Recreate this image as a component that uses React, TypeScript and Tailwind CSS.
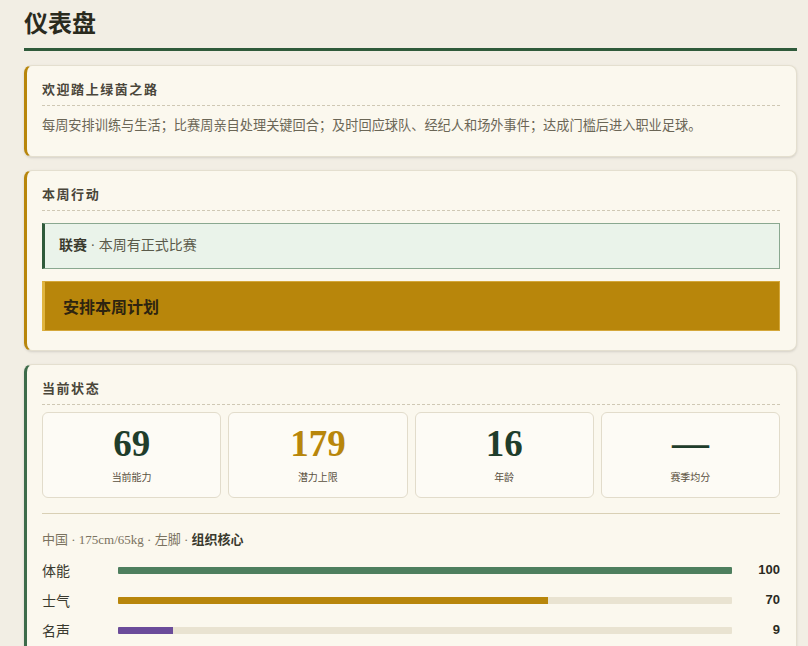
import React from "react";

const SANS = { fontFamily: '"Noto Sans CJK SC", "Noto Sans", sans-serif' };
const SERIF = { fontFamily: '"Liberation Serif", "Noto Sans CJK SC", serif' };
const NUM = { fontFamily: '"Liberation Serif", "DejaVu Serif", serif' };
const VAL = { fontFamily: '"Liberation Sans", Arial, sans-serif' };

interface Stat {
    value: string;
    label: string;
    color: string;
}

const stats: Stat[] = [
    { value: "69", label: "当前能力", color: "text-[#1f3d2b]" },
    { value: "179", label: "潜力上限", color: "text-[#b8860b]" },
    { value: "16", label: "年龄", color: "text-[#1f3d2b]" },
    { value: "—", label: "赛季均分", color: "text-[#1f3d2b]" },
];

const bars = [
    { label: "体能", value: 100, color: "bg-[#4e7f5e]" },
    { label: "士气", value: 70, color: "bg-[#b8860b]" },
    { label: "名声", value: 9, color: "bg-[#6b4c9a]" },
];

function CardTitle({ children }: { children: React.ReactNode }) {
    return (
        <h2
            style={SANS}
            className="text-[13px] leading-5 font-bold tracking-[0.12em] text-[#4a463a] pb-[6px] border-b border-dashed border-[#cfc8b4]"
        >
            {children}
        </h2>
    );
}

export default function App() {
    return (
        <div className="min-h-screen bg-[#f2eee4] pl-6 pr-[11px] pt-[6px] pb-10">
            {/* Header */}
            <h1
                style={SANS}
                className="text-[24px] leading-8 font-bold text-[#2a2a1e] pb-[10px] border-b-[3px] border-[#2f5a3a]"
            >
                仪表盘
            </h1>

            <div className="flex flex-col gap-[13px] mt-[14px]">
                {/* Welcome */}
                <section className="rounded-lg border border-[#e4dfcf] border-l-[3px] border-l-[#b8860b] bg-[#fbf8ee] pl-[15px] pr-4 pt-[13px] pb-[20px] shadow-sm">
                    <CardTitle>欢迎踏上绿茵之路</CardTitle>
                    <p style={SERIF} className="mt-[10px] text-[13.2px] leading-5 text-[#6b6656]">
                        每周安排训练与生活；比赛周亲自处理关键回合；及时回应球队、经纪人和场外事件；达成门槛后进入职业足球。
                    </p>
                </section>

                {/* Weekly action */}
                <section className="rounded-lg border border-[#e4dfcf] border-l-[3px] border-l-[#b8860b] bg-[#fbf8ee] pl-[15px] pr-4 pt-[13px] pb-[19px] shadow-sm">
                    <CardTitle>本周行动</CardTitle>
                    <div className="mt-[12px] border border-[#8aa890] border-l-[3px] border-l-[#2f5a3a] bg-[#eaf3ea] pl-[14px] py-[12px]">
                        <p style={SERIF} className="text-[14px] leading-5 text-[#5a5a4a]">
                            <span className="font-bold text-[#3a3a2e]">联赛</span> · 本周有正式比赛
                        </p>
                    </div>
                    <button
                        style={SANS}
                        className="mt-[12px] w-full h-[50px] text-left bg-[#b8860b] border border-[#d4a73a] border-l-[3px] border-l-[#e0b540] pl-[18px] text-[16px] font-bold text-[#2e2410]"
                    >
                        安排本周计划
                    </button>
                </section>

                {/* Current status */}
                <section className="rounded-lg border border-[#e4dfcf] border-l-[3px] border-l-[#3d6b4a] bg-[#fbf8ee] pl-[15px] pr-4 pt-[13px] pb-6 shadow-sm">
                    <CardTitle>当前状态</CardTitle>
                    <div className="mt-[7px] grid grid-cols-4 gap-[7px]">
                        {stats.map((s) => (
                            <div
                                key={s.label}
                                className="h-[86px] rounded-md border border-[#e2dccb] bg-[#fdfbf5] flex flex-col items-center pt-[11px]"
                            >
                                <span style={NUM} className={`text-[37px] leading-10 font-bold ${s.color}`}>
                                    {s.value}
                                </span>
                                <span style={SANS} className="mt-[6px] text-[10px] leading-[14px] text-[#5a5040]">
                                    {s.label}
                                </span>
                            </div>
                        ))}
                    </div>

                    <div className="mt-[15px] border-t border-[#d9d0b5]" />

                    <p style={SERIF} className="mt-[16px] text-[13px] leading-5 text-[#7a7260]">
                        中国 · 175cm/65kg · 左脚 · <span className="font-bold text-[#3a3a2e]">组织核心</span>
                    </p>

                    <div className="mt-[10px] flex flex-col gap-[10px]">
                        {bars.map((b) => (
                            <div key={b.label} className="flex items-center h-5">
                                <span style={SANS} className="w-[76px] text-[14px] leading-5 text-[#3a3a2e]">
                                    {b.label}
                                </span>
                                <div className="flex-1 h-[7px] bg-[#e9e3d1] rounded-[1px] overflow-hidden">
                                    <div className={`h-full ${b.color}`} style={{ width: `${b.value}%` }} />
                                </div>
                                <span style={VAL} className="w-12 text-right text-[13px] font-bold text-[#2a2a1e]">
                                    {b.value}
                                </span>
                            </div>
                        ))}
                    </div>
                </section>
            </div>
        </div>
    );
}
